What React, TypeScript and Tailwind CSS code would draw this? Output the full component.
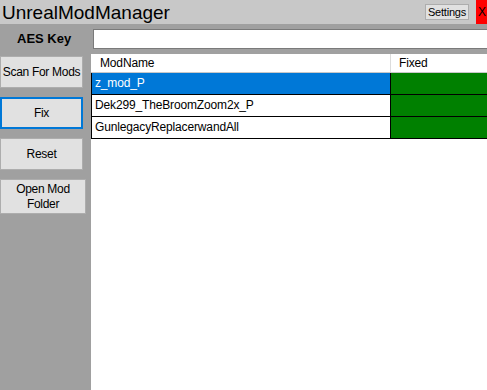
import React from "react";

const MODS = [
  { name: "z_mod_P", selected: true },
  { name: "Dek299_TheBroomZoom2x_P", selected: false },
  { name: "GunlegacyReplacerwandAll", selected: false },
];

function SideButton({ label, focused, wide }: { label: string; focused?: boolean; wide?: boolean }) {
  return (
    <button
      className={`flex items-center justify-center bg-[#e1e1e1] text-[12px] leading-[15px] tracking-[-0.3px] text-black text-center ${
        focused ? "border-2 border-[#0078d7]" : "border border-[#adadad]"
      } ${wide ? "w-[86px] h-[35px] px-[12px]" : "w-[83px] h-[32px] whitespace-nowrap"}`}
    >
      {label}
    </button>
  );
}

export default function App() {
  return (
    <div
      className="w-[487px] h-[390px] flex flex-col bg-[#a0a0a0] overflow-hidden"
      style={{ fontFamily: '"Liberation Sans", Arial, sans-serif' }}
    >
      {/* Title bar */}
      <div className="h-[24px] bg-[#c8c8c8] flex items-center">
        <span className="pl-[2px] text-[19px] leading-none text-black">UnrealModManager</span>
        <button className="ml-auto mr-[7px] h-[16px] w-[44px] border border-[#adadad] bg-[#e1e1e1] text-[11px] leading-none tracking-[-0.2px] text-black whitespace-nowrap">
          Settings
        </button>
        <div className="w-[11px] h-[24px] bg-[#ff0000] text-[12px] leading-[24px] pl-[2px] text-black overflow-hidden">
          X
        </div>
      </div>

      {/* AES key row */}
      <div className="h-[30px] flex items-center">
        <div className="w-[93px] pl-[17px] text-[13px] font-bold text-black">AES Key</div>
        <div className="flex-1 h-[20px] bg-white border border-[#7a7a7a] border-r-0" />
      </div>

      {/* Main area */}
      <div className="flex-1 flex">
        <div className="w-[91px] flex flex-col gap-[9px] pt-[2px]">
          <SideButton label="Scan For Mods" />
          <SideButton label="Fix" focused />
          <SideButton label="Reset" />
          <SideButton label="Open Mod Folder" wide />
        </div>

        <div className="flex-1 bg-white flex flex-col text-[12px] tracking-[-0.15px] text-black">
          <div className="h-[19px] flex border-b border-[#c8c8c8]">
            <div className="w-[300px] pl-[9px] leading-[19px] border-r border-[#dcdcdc]">ModName</div>
            <div className="flex-1 pl-[8px] leading-[19px]">Fixed</div>
          </div>
          {MODS.map((m) => (
            <div key={m.name} className="h-[22px] flex border-b border-black">
              <div
                className={`w-[300px] pl-[3px] leading-[21px] border-l border-r border-black ${
                  m.selected ? "bg-[#0078d7] text-white" : "bg-white text-black"
                }`}
              >
                {m.name}
              </div>
              <div className="flex-1 bg-[#008000]" />
            </div>
          ))}
        </div>
      </div>
    </div>
  );
}
